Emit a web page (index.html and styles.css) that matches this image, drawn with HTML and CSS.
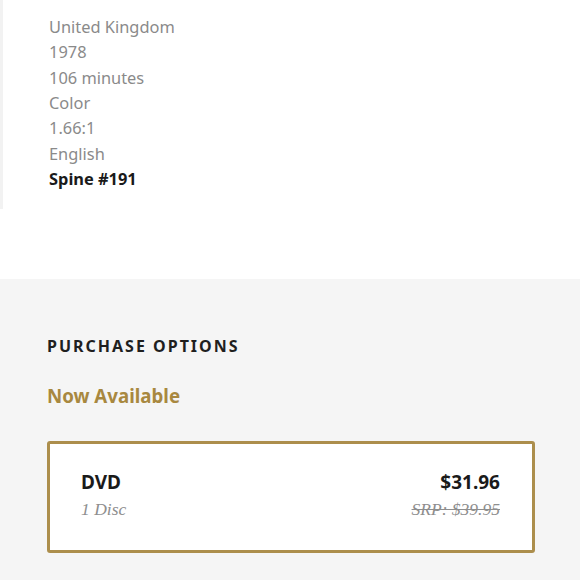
FILE: index.html
```html
<!DOCTYPE html>
<html>
<head>
<meta charset="utf-8">
<link rel="stylesheet" href="styles.css">
</head>
<body>
<section class="details">
  <ul class="specs">
    <li>United Kingdom</li>
    <li>1978</li>
    <li>106 minutes</li>
    <li>Color</li>
    <li>1.66:1</li>
    <li>English</li>
    <li class="spine">Spine #191</li>
  </ul>
</section>
<section class="purchase">
  <h2 class="title">PURCHASE OPTIONS</h2>
  <h3 class="status">Now Available</h3>
  <div class="option">
    <div class="format">
      <div class="name">DVD</div>
      <div class="discs">1 Disc</div>
    </div>
    <div class="pricing">
      <div class="price">$31.96</div>
      <div class="srp">SRP: $39.95</div>
    </div>
  </div>
</section>
</body>
</html>
```
FILE: styles.css
```css
html, body {
  margin: 0;
  padding: 0;
  background: #f5f5f5;
}
body {
  font-family: "Noto Sans", "Liberation Sans", sans-serif;
  width: 580px;
  height: 580px;
  overflow: hidden;
}
.details {
  background: #fff;
  padding-bottom: 70px;
}
.specs {
  list-style: none;
  margin: 0;
  padding: 14px 0 18px 46px;
  border-left: 3px solid #f2f2f2;
}
.specs li {
  font-size: 16.4px;
  line-height: 25.35px;
  color: #8a8a8a;
}
.specs .spine {
  color: #1a1a1a;
  font-weight: 700;
}
.purchase {
  padding: 56px 45px 40px 47px;
}
.title {
  margin: 0;
  font-size: 16px;
  line-height: 22px;
  letter-spacing: 2px;
  font-weight: 700;
  color: #1f1f1f;
}
.status {
  margin: 27px 0 0;
  font-size: 18.7px;
  line-height: 24px;
  font-weight: 700;
  color: #a8883f;
}
.option {
  margin-top: 33px;
  box-sizing: border-box;
  height: 112px;
  border: 3px solid #ac8e4c;
  border-radius: 3px;
  background: #fff;
  display: flex;
  justify-content: space-between;
  align-items: flex-start;
  padding: 26px 32px 0 31px;
}
.name, .price {
  font-size: 19px;
  line-height: 24px;
  font-weight: 700;
  color: #1a1a1a;
}
.pricing {
  text-align: right;
}
.discs, .srp {
  font-family: "Liberation Serif", serif;
  font-style: italic;
  font-size: 17.5px;
  line-height: 27px;
  margin-top: 2px;
  color: #8e8e8e;
}
.srp {
  text-decoration: line-through;
}
```
